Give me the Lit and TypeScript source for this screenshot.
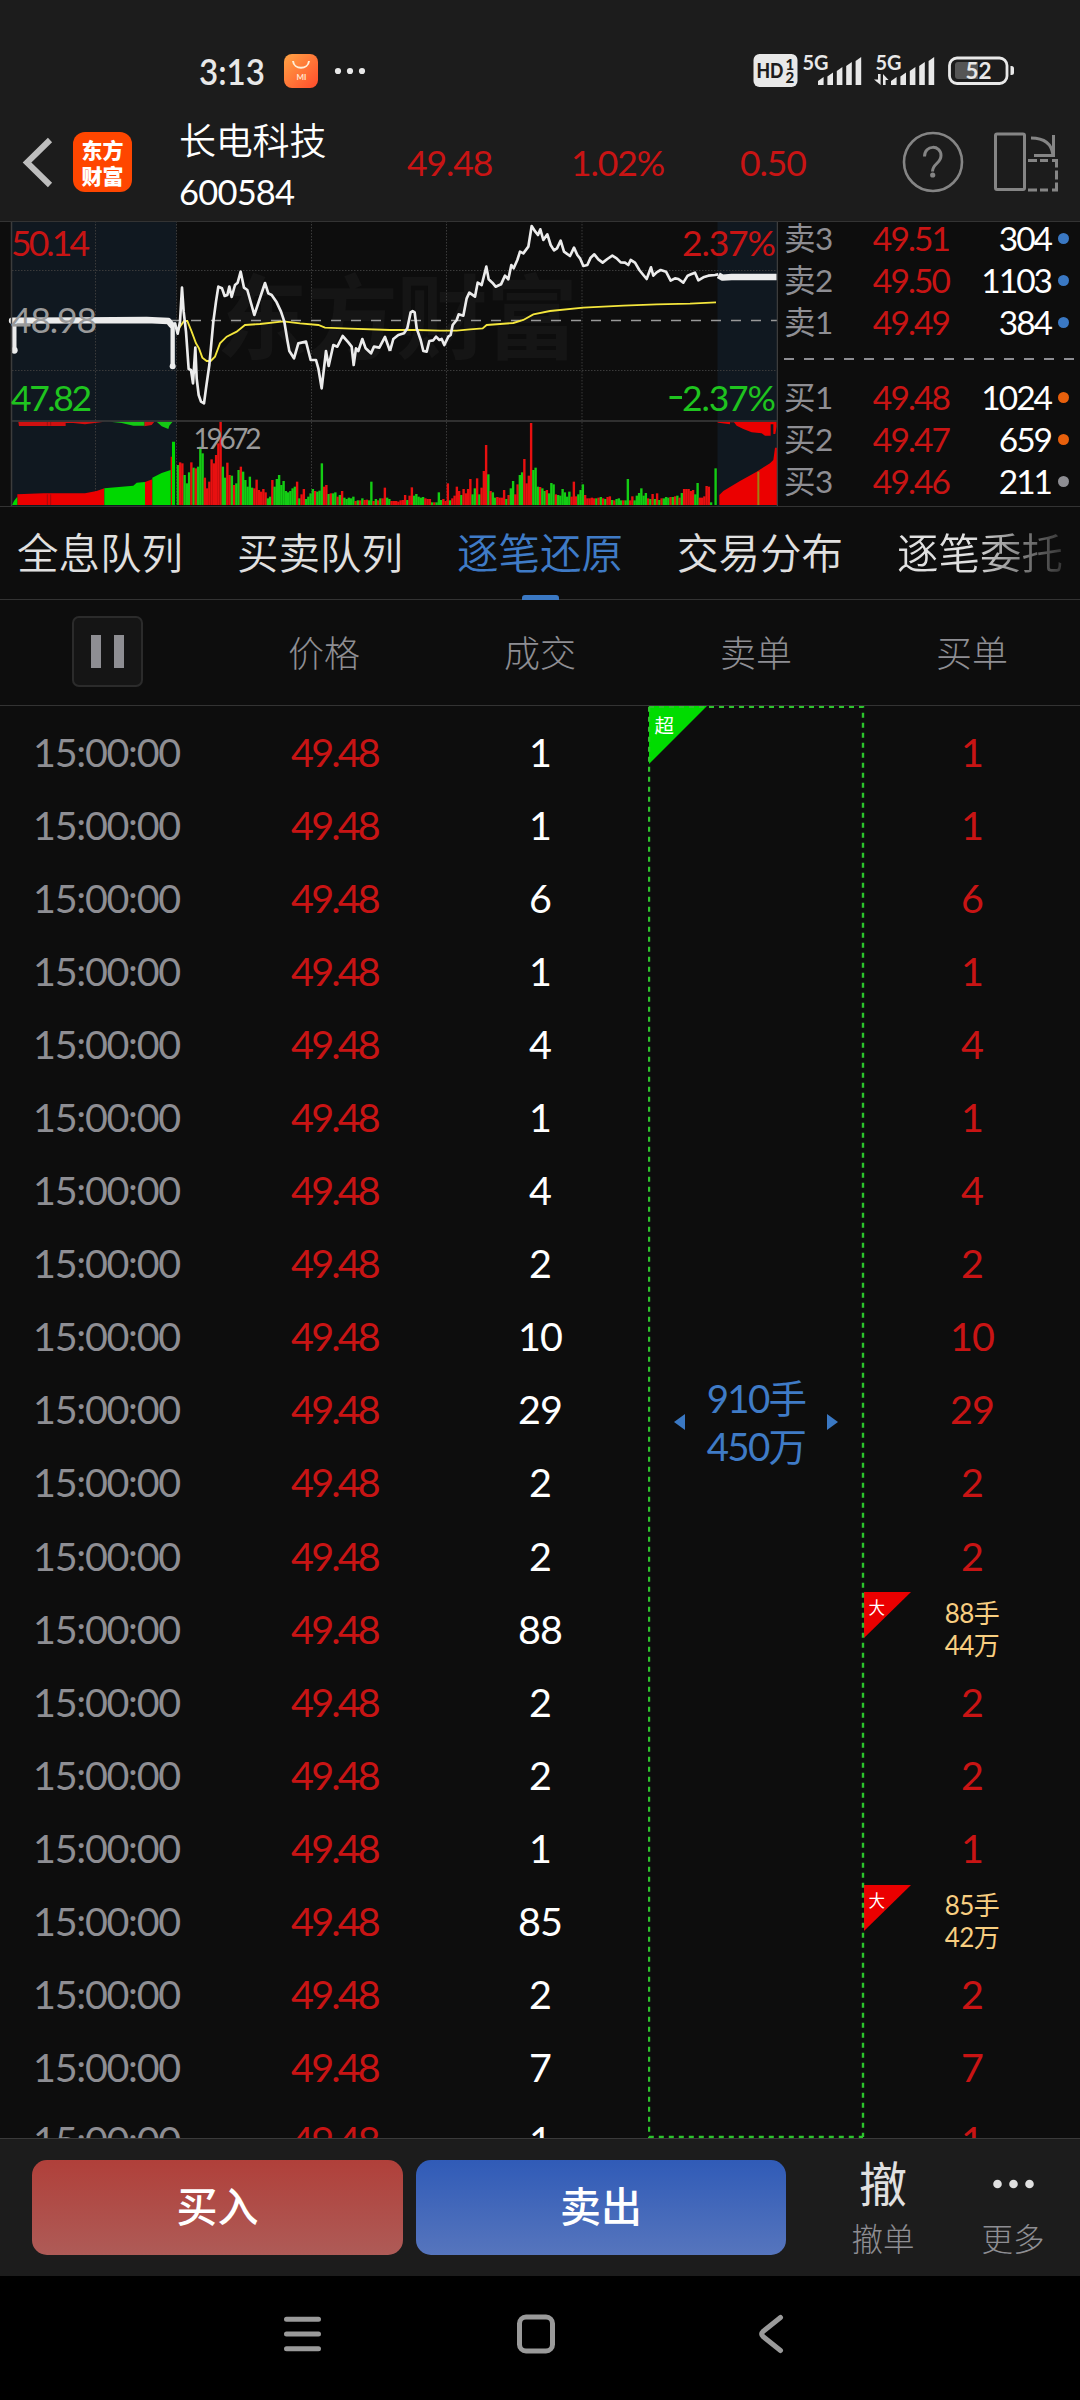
import { LitElement, html, css, svg, nothing } from "lit";
import { customElement } from "lit/decorators.js";

interface Quote { label: string; price: string; volume: string; tone: string; }
interface Tick { volume: string; lots?: string; amount?: string; }

const SELLS: Quote[] = [
  { label: "卖3", price: "49.51", volume: "304", tone: "blue" },
  { label: "卖2", price: "49.50", volume: "1103", tone: "blue" },
  { label: "卖1", price: "49.49", volume: "384", tone: "blue" },
];
const BUYS: Quote[] = [
  { label: "买1", price: "49.48", volume: "1024", tone: "orange" },
  { label: "买2", price: "49.47", volume: "659", tone: "orange" },
  { label: "买3", price: "49.46", volume: "211", tone: "gray" },
];
const TABS = ["全息队列", "买卖队列", "逐笔还原", "交易分布", "逐笔委托"];
const TICKS: Tick[] = [
  ..."1 1 6 1 4 1 4 2 10 29 2 2".split(" ").map((volume) => ({ volume })),
  { volume: "88", lots: "88手", amount: "44万" },
  { volume: "2" }, { volume: "2" }, { volume: "1" },
  { volume: "85", lots: "85手", amount: "42万" },
  { volume: "2" }, { volume: "7" }, { volume: "1" },
];

/* One entry per trading minute: direction (r = up, g = down) and bar height. */
const VOLUME = (
  "g120 r128 r125 g90 g65 g98 r128 g112 r110 g115 g175 g155 r82 r50 r70 r137 r125 r150 r185 r250 " +
  "g115 g82 r127 r90 g88 r60 g65 g105 r115 g100 g75 g55 g85 g52 r50 r76 r45 r40 r48 r38 g20 g25 r75 " +
  "g55 g78 g90 g60 g72 g42 g38 g42 g50 g55 r70 g20 r32 r48 g18 g25 g35 g48 r42 g40 g43 g125 r55 r60 " +
  "g33 r35 g35 g38 r25 g30 r42 g22 g18 g22 g20 g25 r12 g14 r14 g20 r15 r16 g14 g70 r12 g18 r14 g20 " +
  "r20 r52 g22 g18 r12 r12 r12 r10 r14 r15 r30 g15 r28 r53 g28 g33 g25 g22 g24 r20 r18 r18 g8 r8 g8 " +
  "g38 g15 r18 r12 r65 g14 r20 r28 r55 r42 g30 r48 r35 r48 r78 g32 g50 r80 g32 r52 r102 r180 g92 r42 " +
  "g38 g22 r24 r22 r22 r45 g18 r30 g50 g72 r32 r62 g90 g98 r138 r65 r88 r246 g105 g112 g55 r54 g50 g42 " +
  "r45 g35 g66 g62 r32 g30 g28 g48 g38 g25 g40 r25 r70 r26 g32 g45 g62 r30 r20 r20 r22 r20 g20 r22 g24 " +
  "r20 g18 r24 r26 g15 r14 g18 g20 g14 r14 g14 g78 r14 r26 g14 g28 g36 g50 g28 g36 r20 g18 r33 g18 r35 " +
  "g15 r20 g20 g24 g22 r24 g24 r26 g28 r22 g36 r48 r48 r48 r42 r45 g32 g66 r22 r22 r26 r57 r55 g8 g0 g110"
).split(" ");

const PRICE_AM =
  "518,330 525,325 533,356 540,320 546,218 551,290 558,350 566,462 573,465 579,505 586,398 590,490 596,540 603,560 612,565 618,520 628,450 640,320 648,260 655,215 666,220 674,243 682,240 688,215 695,246 705,210 713,203 722,170 732,218 742,225 763,300 778,255 795,204 805,235 815,240 830,262 843,290 853,320 862,375 868,408 882,430 895,385 918,380 932,435 948,435 955,460 965,520 978,408 986,453 1000,390 1012,395 1028,363 1045,382 1055,395 1061,450 1068,400 1075,408 1087,372 1097,400 1113,415 1122,395 1138,398 1155,366 1170,408";
const PRICE_PM =
  "0,408 10,372 25,360 42,355 52,340 62,292 68,288 74,292 80,340 92,375 100,408 110,410 118,378 130,376 138,365 148,375 155,372 163,390 175,365 182,360 188,330 200,315 206,298 220,302 230,250 238,233 255,245 263,203 275,210 289,155 296,193 307,203 317,215 333,208 345,182 355,193 364,150 371,160 382,135 390,110 400,115 415,95 425,33 436,50 444,60 451,43 460,75 472,58 482,90 492,106 501,100 512,77 522,110 540,123 552,98 562,120 570,130 580,153 592,150 602,128 613,118 625,133 638,143 652,132 667,122 680,130 692,142 705,143 715,150 722,135 735,143 748,165 760,180 770,192 783,157 790,182 800,172 812,165 828,170 842,197 855,190 865,192 880,203 893,182 903,178 915,173 925,196 940,187 955,182 975,180 985,178";
const AVG_AM =
  "533,350 540,335 552,318 562,318 575,350 588,385 597,400 607,428 620,438 632,438 645,425 660,385 680,365 710,350 735,330 780,327 850,319 900,325 955,330 975,338 1050,341 1170,345";
const AVG_PM =
  "0,345 80,345 150,347 200,347 240,343 278,340 290,330 330,327 370,324 400,315 430,298 480,288 580,278 700,272 800,268 900,266 978,262";

@customElement("status-strip")
export class StatusStrip extends LitElement {
  static styles = css`
    :host { display: block; height: 110px; }
    svg { display: block; }
    text { font-family: Lato, "Liberation Sans", sans-serif; font-weight: 700; fill: #e8e8e8; }
    .clock { font-size: 37px; font-weight: 600; }
    .gen { font-size: 21px; }
    .hd { font-size: 21px; fill: #1c1c1c; font-weight: 900; }
    .sim { font-size: 15px; fill: #1c1c1c; font-weight: 900; }
    .mi { font-size: 8px; fill: #ffe4cc; }
    .level { font-size: 23px; }
  `;
  private bars(x: number) {
    const tops = [77, 72.5, 67, 62, 57];
    return tops.map((t, i) => {
      const l = x + i * 9.4;
      return svg`<path fill="#e8e8e8" d="M${l} ${t + 4}L${l + 5.6} ${t}V85H${l}Z"/>`;
    });
  }
  render() {
    return html`<svg width="1080" height="110" viewBox="0 0 1080 110">
      <defs><linearGradient id="bag" x1="0" y1="0" x2="1" y2="1">
        <stop offset="0" stop-color="#ffa445"/><stop offset="1" stop-color="#ff4b2b"/></linearGradient></defs>
      <text class="clock" x="199" y="84.5" textLength="66" lengthAdjust="spacingAndGlyphs">3:13</text>
      <rect x="284" y="54" width="34" height="34" rx="8" fill="url(#bag)"/>
      <path d="M293 61c1 9 15 9 16 0" fill="none" stroke="#fff0d8" stroke-width="2"/>
      <text class="mi" x="296.5" y="79.5">MI</text>
      <g fill="#e8e8e8"><circle cx="338" cy="71" r="3.1"/><circle cx="350" cy="71" r="3.1"/><circle cx="362" cy="71" r="3.1"/></g>
      <rect x="753.5" y="54" width="44" height="33" rx="6" fill="#e8e8e8"/>
      <text class="hd" x="756.5" y="77.5" textLength="27" lengthAdjust="spacingAndGlyphs">HD</text>
      <text class="sim" x="785.5" y="69.5">1</text><text class="sim" x="785.5" y="83">2</text>
      <text class="gen" x="802.5" y="69.5" textLength="26" lengthAdjust="spacingAndGlyphs">5G</text>
      ${this.bars(818)}
      <text class="gen" x="875.5" y="69.5" textLength="26" lengthAdjust="spacingAndGlyphs">5G</text>
      ${this.bars(891)}
      <path fill="#e8e8e8" d="M878 74h2.6v11L874 79.500h4zM883 85h2.600v-5h3L883 74z"/>
      <rect x="949.500" y="58" width="57.500" height="25.500" rx="7.500" fill="none" stroke="#e8e8e8" stroke-width="2.800"/>
      <path d="M958 62h20v17h-20q-3 0-3-3V65q0-3 3-3z" fill="#555"/>
      <path d="M1010.500 66h1q2.500 0 2.500 2.500v4q0 2.500-2.500 2.500h-1z" fill="#e8e8e8"/>
      <text class="level" x="965.500" y="79" textLength="26" lengthAdjust="spacingAndGlyphs">52</text>
    </svg>`;
  }
}

@customElement("stock-header")
export class StockHeader extends LitElement {
  static styles = css`
    :host { display: flex; align-items: center; height: 112px; box-sizing: border-box; padding: 0 19px 8px 22px;
      border-bottom: 1px solid #333; font-family: Lato, "Noto Sans CJK SC", sans-serif; }
    svg { display: block; flex: none; }
    .logo { width: 59px; height: 60px; border-radius: 12px; background: #ff4600; color: #fff; margin-left: 18px;
      font: 900 21px/26px "Noto Sans CJK SC", sans-serif; display: flex; flex-direction: column;
      align-items: center; justify-content: center; flex: none; }
    .who { margin: 8px 0 0 47px; width: 215px; color: #fff; display: flex; flex-direction: column; flex: none; }
    .name { font-size: 37px; line-height: 51px; font-weight: 350; white-space: nowrap; letter-spacing: -0.200px; }
    .code { font-size: 34.500px; line-height: 51px; letter-spacing: -0.800px; }
    .num { color: #c81414; font-size: 35.500px; line-height: 50px; flex: none; letter-spacing: -1.100px; margin-top: 2px; }
    .price { width: 164px; margin-left: 13px; }
    .pct { width: 169px; }
    .diff { width: 162px; }
    .swap { margin-left: 29px; }
  `;
  render() {
    return html`
      <svg width="33" height="54" viewBox="22 135 33 54" fill="none" stroke="#bdbdbd" stroke-width="6"><path d="M50 140L27 162.500 50 185"/></svg>
      <div class="logo"><span>东方</span><span>财富</span></div>
      <div class="who"><span class="name">长电科技</span><span class="code">600584</span></div>
      <span class="num price">49.48</span><span class="num pct">1.02%</span><span class="num diff">0.50</span>
      <svg width="62" height="62" viewBox="0 0 62 62" fill="none" stroke="#858585" stroke-width="2.600">
        <circle cx="31" cy="31" r="29"/>
        <path d="M22.500 25.500c0-12 16.500-12 16.500-1 0 8-8.500 8-8.500 16" stroke-width="3"/>
        <circle cx="30.700" cy="44" r="2.600" fill="#858585" stroke="none"/></svg>
      <svg class="swap" width="66" height="62" viewBox="993 131 66 62" fill="none" stroke="#858585" stroke-width="3">
        <rect x="995.500" y="134" width="29" height="55.500" rx="1.500"/>
        <path d="M1031 138q20 0 22 17M1053.500 135v20.500H1034"/>
        <path d="M1028 160.500h9m3 0h8m4 0h4.500v7m0 3v9m0 3v7.500H1052m-4 0h-8m-3 0h-9"/></svg>`;
  }
}

@customElement("minute-chart")
export class MinuteChart extends LitElement {
  static styles = css`
    :host { display: block; width: 778px; flex: none; }
    svg { display: block; }
    text { font-family: Lato, "Noto Sans CJK SC", sans-serif; font-size: 35.500px; }
    .mark { font: 700 92px "Noto Sans CJK SC", sans-serif; fill: #151515; }
    .up { fill: #c81414; } .down { fill: #1fc41f; } .mid { fill: #9a9a9a; }
    .peak { font-size: 28px; fill: #999; }
    .grid { stroke: #3a3a3a; stroke-width: 1; stroke-dasharray: 1.500 1.500; fill: none; }
  `;
  render() {
    const bar = (v: string, i: number) => {
      const h = Number(v.slice(1));
      return svg`<rect x=${530 + i * 6.75} y=${870 - h} width="7.2" height=${h} fill=${v[0] === "r" ? "#e81010" : "#14cc14"}/>`;
    };
    return html`<svg width="778" height="284" viewBox="0 222 778 284">
      <rect x="12" y="221" width="164.500" height="285" fill="#101820"/>
      <rect x="717.500" y="221" width="60" height="285" fill="#101820"/>
      <text class="mark" x="216" y="352" textLength="362">东方财富</text>
      <path class="grid" d="M95.500 221V506M176.500 221V506M311.500 221V506M446.500 221V506M582 221V506M12 270.500H777M12 370.500H777"/>
      <path d="M171 320.500H777" stroke="#999" stroke-width="1.500" stroke-dasharray="10 10"/>
      <g transform="translate(0 215) scale(.33333)">
        <path fill="#eb0000" d="M52 870V838L130 835H255L290 828 313 820V870ZM435 870V801L457 793V870ZM512 870V725H518V870Z"/>
        <path fill="#00d800" d="M36 870L42 858 52 845V870ZM313 870V820L400 812 410 803 435 801V870ZM457 870V788L485 774 512 765V870ZM516 680H525V870H516Z"/>
        <path fill="#d01010" d="M55 620H313L255 628 220 624 197 624V633H57ZM433 620H463L455 630 433 634Z"/>
        <path fill="#14c814" d="M330 620H433V632H400L365 624ZM470 620H518L508 632 505 642 485 634Z"/>
        <path d="M142 620v12M152 620v12M142 838v32M152 838v32" stroke="#801010" stroke-width="2"/>
        ${VOLUME.map(bar)}
        <polyline points=${AVG_AM} fill="none" stroke="#f4e63c" stroke-width="5.500"/>
        <polyline points=${PRICE_AM} fill="none" stroke="#ececec" stroke-width="8" stroke-linejoin="round"/>
        <path d="M36 317L240 316 440 315 505 318 515 330" fill="none" stroke="#ececec" stroke-width="19" stroke-linecap="round" stroke-linejoin="round"/>
        <path d="M43 320V408M518 330V455M38 365h4M513 374h4" fill="none" stroke="#ececec" stroke-width="13"/>
        <circle cx="43" cy="406" r="10" fill="#ececec"/><circle cx="518" cy="454" r="9" fill="#ececec"/>
      </g>
      <g transform="translate(390 215) scale(.33333)">
        <path fill="#eb0000" d="M988 870V840L1000 828 1050 798 1100 770 1140 745 1150 735 1155 698H1162V870Z"/>
        <path fill="#eb0000" d="M980 620H1160V635L1156 657H1150V628H1142V662H1125L1115 655 1085 652 1060 642 1040 632 1032 622H1020V628L985 623Z"/>
        <path d="M1105 770V870" stroke="#a08010" stroke-width="6"/>
        <polyline points=${AVG_PM} fill="none" stroke="#f4e63c" stroke-width="5.500"/>
        <polyline points=${PRICE_PM} fill="none" stroke="#ececec" stroke-width="8" stroke-linejoin="round"/>
        <path d="M985 181L998 188 1025 186H1160" fill="none" stroke="#ececec" stroke-width="19" stroke-linejoin="round"/>
      </g>
      <path d="M11.500 221V506M777.500 221V506M11.500 421H778" fill="none" stroke="#3c3c3c" stroke-width="1.500"/>
      <text class="up" x="11" y="256" textLength="79">50.14</text>
      <text class="mid" x="11" y="333" textLength="86">48.98</text>
      <text class="down" x="11" y="411" textLength="81">47.82</text>
      <text class="up" x="682" y="256" textLength="94">2.37%</text>
      <path d="M669.500 397.500H682" stroke="#1fc41f" stroke-width="3"/>
      <text class="down" x="682" y="411" textLength="94">2.37%</text>
      <text class="peak" x="193.500" y="449" textLength="68">19672</text>
    </svg>`;
  }
}

@customElement("order-book")
export class OrderBook extends LitElement {
  static styles = css`
    :host { display: flex; flex-direction: column; flex: 1; padding: 0 11px 0 6px; box-sizing: border-box;
      font-family: Lato, "Noto Sans CJK SC", sans-serif; margin-top: -5px; }
    .row { display: grid; grid-template-columns: 70px 95px 102px 18px; height: 42px; align-items: center; font-size: 33.500px;
      line-height: 42px; white-space: nowrap; }
    .label { color: #8e8e93; font-size: 31.500px; letter-spacing: -0.500px; }
    .price { color: #c81414; text-align: right; letter-spacing: -1.900px; }
    .volume { color: #fff; text-align: right; letter-spacing: -2px; }
    .dot { width: 11px; height: 11px; border-radius: 50%; justify-self: end; }
    .blue { background: #3a78c3; } .orange { background: #e8600c; } .gray { background: #8e8e93; }
    .cut { display: block; margin: 15px 0 16px 0; }
  `;
  private row = (q: Quote) => html`<div class="row"><span class="label">${q.label}</span><span class="price">${q.price}</span>
    <span class="volume">${q.volume}</span><span class="dot ${q.tone}"></span></div>`;
  render() {
    return html`${SELLS.map(this.row)}
      <svg class="cut" width="292" height="2" viewBox="0 0 292 2"><path d="M0 1H292" stroke="#8e8e93" stroke-width="2" stroke-dasharray="10 10"/></svg>
      ${BUYS.map(this.row)}`;
  }
}

@customElement("tick-list")
export class TickList extends LitElement {
  static styles = css`
    :host { display: block; height: 1432px; overflow: hidden; position: relative; padding-top: 9px; box-sizing: border-box;
      font-family: Lato, "Noto Sans CJK SC", sans-serif; }
    .row { display: grid; grid-template-columns: repeat(5, 216px); height: 73.100px; align-items: center; text-align: center;
      font-size: 39.500px; line-height: 48px; }
    .time { color: #8e8e93; letter-spacing: -1.300px; padding-right: 3px; }
    .price { color: #c81414; padding-left: 21px; letter-spacing: -2.800px; }
    .vol { color: #fff; letter-spacing: -1px; }
    .buy { grid-column: 5; color: #c81414; letter-spacing: -1px; }
    .big { grid-column: 5; align-self: stretch; position: relative; color: #f8ce80; font-size: 26px; line-height: 32px;
      display: flex; flex-direction: column; justify-content: center; letter-spacing: -0.600px; }
    .flag { position: absolute; left: 0; top: 0; }
    .frame { position: absolute; left: 648px; top: 0; }
    .sum { position: absolute; left: 648px; top: 668px; width: 216px; display: flex; align-items: center; justify-content: center;
      color: #3f7bc6; gap: 23px; }
    .total { display: flex; flex-direction: column; font-size: 38.500px; line-height: 48px; text-align: center; width: 96px;
      white-space: nowrap; align-items: center; letter-spacing: -1.700px; }
    text { font-family: "Noto Sans CJK SC", sans-serif; fill: #fff; }
    .super { font-size: 19.500px; } .large { font-size: 16.500px; }
  `;
  private row = (t: Tick) => html`<div class="row">
    <span class="time">15:00:00</span><span class="price">49.48</span><span class="vol">${t.volume}</span>
    ${t.lots
      ? html`<div class="big"><svg class="flag" width="48" height="48" viewBox="0 0 48 48"><path d="M0 0H47L0 46Z" fill="#eb0000"/>
          <text class="large" x="4.500" y="22">大</text></svg><span>${t.lots}</span><span>${t.amount}</span></div>`
      : html`<span class="buy">${t.volume}</span>`}
  </div>`;
  render() {
    return html`${TICKS.map(this.row)}
      <svg class="frame" width="218" height="1432" viewBox="0 0 218 1432">
        <path d="M1 0H59L1 58Z" fill="#00dc00"/>
        <text class="super" x="6.500" y="26.500">超</text>
        <path d="M1 .8H215V1431M1 .8V1431H215" fill="none" stroke="#2cc42c" stroke-width="2.400" stroke-dasharray="5 5"/>
      </svg>
      <div class="sum">
        <svg width="11" height="16" viewBox="0 0 11 16"><path d="M11 0V16L0 8Z" fill="#3a78c3"/></svg>
        <div class="total"><span>910手</span><span>450万</span></div>
        <svg width="11" height="16" viewBox="0 0 11 16"><path d="M0 0V16L11 8Z" fill="#3a78c3"/></svg>
      </div>`;
  }
}

@customElement("trade-bar")
export class TradeBar extends LitElement {
  static styles = css`
    :host { display: flex; height: 138px; box-sizing: border-box; border-top: 1px solid #3a3a3a; background: #1c1c1c;
      padding: 21px 0 0 32px; font-family: Lato, "Noto Sans CJK SC", sans-serif; }
    .btn { width: 371px; height: 95px; border-radius: 15px; color: #fff; font-size: 41px; line-height: 94px; text-align: center;
      font-weight: 500; margin-right: 13px; flex: none; }
    .buy { background: linear-gradient(#b0403a, #ae5b57); }
    .sell { background: linear-gradient(#305bb7, #5675bd); width: 370px; margin-right: 32px; }
    .item { width: 130px; display: flex; flex-direction: column; align-items: center; flex: none; }
    .glyph { color: #e0e0e0; font-size: 48px; line-height: 54px; height: 54px; font-weight: 400; margin-top: -3px; }
    .label { color: #8e8e93; font-size: 31.500px; line-height: 46px; font-weight: 300; margin-top: 5px; }
    svg { display: block; }
  `;
  render() {
    return html`<div class="btn buy">买入</div><div class="btn sell">卖出</div>
      <div class="item"><span class="glyph">撤</span><span class="label">撤单</span></div>
      <div class="item"><span class="glyph"><svg width="44" height="54" viewBox="0 0 44 54" fill="#e0e0e0">
        <circle cx="6.500" cy="27" r="4.300"/><circle cx="22.500" cy="27" r="4.300"/><circle cx="38.500" cy="27" r="4.300"/></svg></span><span class="label">更多</span></div>`;
  }
}

@customElement("app-root")
export class AppRoot extends LitElement {
  static styles = css`
    :host { display: block; width: 1080px; height: 2400px; overflow: hidden; background: #0d0d0d;
      font-family: Lato, "Noto Sans CJK SC", sans-serif; }
    .top { background: #1c1c1c; height: 222px; display: flex; flex-direction: column; }
    .market { display: flex; height: 285px; box-sizing: border-box; border-bottom: 1px solid #333; }
    .tabs { display: flex; height: 93px; box-sizing: border-box; border-bottom: 1px solid #333; }
    .strip { display: flex; margin-left: -10px; flex: none; }
    .tab { width: 220px; height: 93px; display: flex; flex-direction: column; align-items: center; justify-content: space-between;
      color: #e0e0e0; font-size: 41.500px; font-weight: 350; line-height: 92px; white-space: nowrap; }
    .tab:last-child .word { background: linear-gradient(90deg, #e0e0e0 45%, #333 100%); background-clip: text; -webkit-background-clip: text; color: transparent; }
    .word { height: 88px; }
    .on { color: #3f7bc6; }
    .line { width: 37px; height: 5px; border-radius: 3px 3px 0 0; background: #3a78c3; }
    .heads { display: grid; grid-template-columns: repeat(5, 216px); height: 106px; box-sizing: border-box; border-bottom: 1px solid #333;
      align-items: center; text-align: center; color: #8e8e93; font-size: 36px; font-weight: 300; line-height: 50px; }
    .pause { width: 67px; height: 67px; border: 2px solid #2b2b2b; border-radius: 7px; background: #151515; justify-self: center;
      display: flex; gap: 13px; align-items: center; justify-content: center; margin: 0 2px 2px 0; }
    .pause i { width: 10px; height: 33px; background: #8e8e93; }
    .nav { background: #000; height: 124px; }
    .nav svg { display: block; }
  `;
  render() {
    return html`
      <div class="top"><status-strip></status-strip><stock-header></stock-header></div>
      <div class="market"><minute-chart></minute-chart><order-book></order-book></div>
      <div class="tabs"><div class="strip">${TABS.map((t, i) => html`<div class="tab ${i === 2 ? "on" : ""}">
        <span class="word">${t}</span>${i === 2 ? html`<span class="line"></span>` : nothing}</div>`)}</div></div>
      <div class="heads"><div class="pause"><i></i><i></i></div><span>价格</span><span>成交</span><span>卖单</span><span>买单</span></div>
      <tick-list></tick-list>
      <trade-bar></trade-bar>
      <div class="nav"><svg width="1080" height="124" viewBox="0 2276 1080 124" fill="none" stroke="#9a9a9a" stroke-width="5" stroke-linecap="round" stroke-linejoin="round">
        <path d="M286.500 2319.300H318.500M286.500 2334H318.500M286.500 2348.700H318.500"/>
        <rect x="519.500" y="2317" width="33" height="34" rx="6.500"/>
        <path d="M780.500 2317.500L763 2331.500Q760.500 2334 763 2336.500L780.500 2350.500"/></svg></div>`;
  }
}
